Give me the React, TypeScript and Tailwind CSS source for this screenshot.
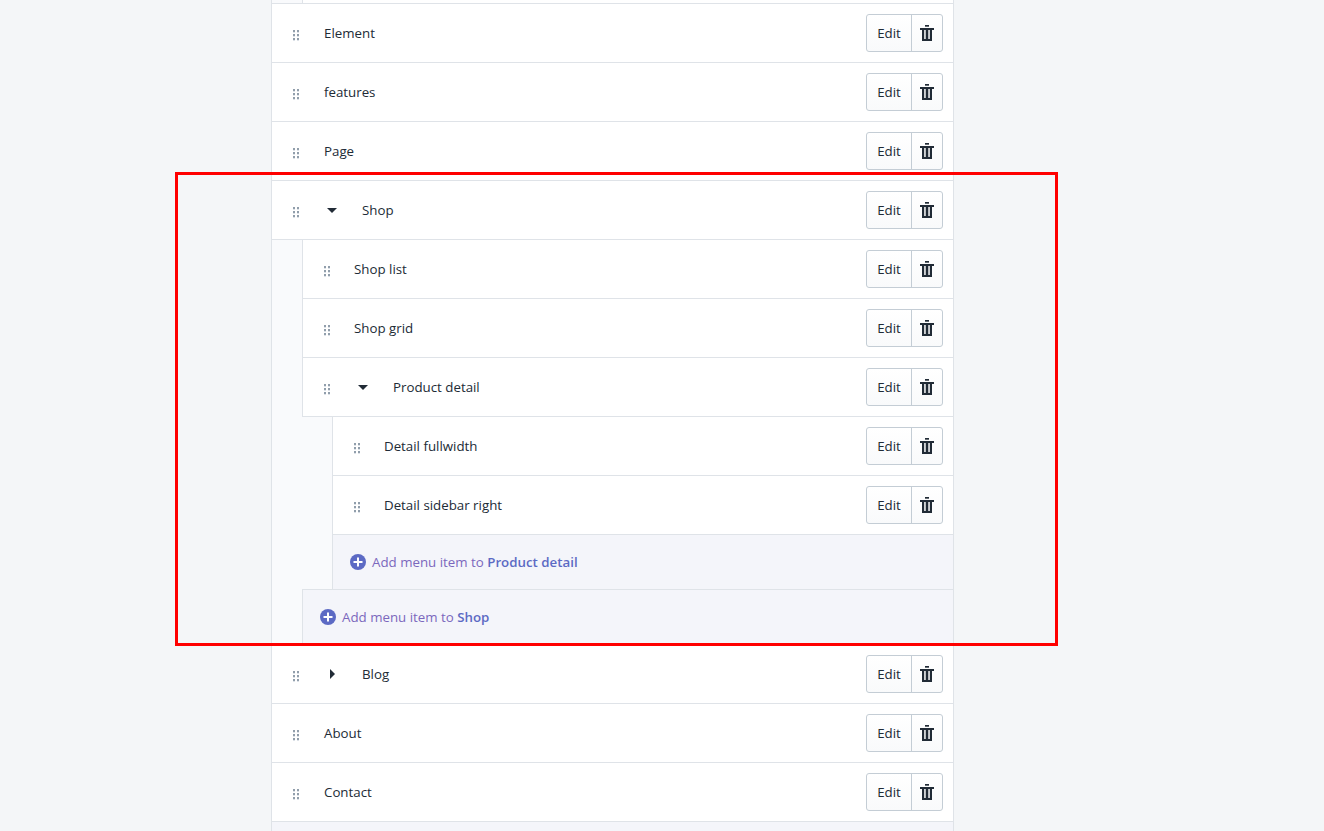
const dotPositions = [0, 1, 2];

const DragHandle = () => (
  <div className="mt-1 grid w-[6px] shrink-0 grid-cols-2 gap-x-[2px] gap-y-[2px]">
    {dotPositions.map((d) => (
      <span key={d} className="contents">
        <span className="h-[2px] w-[2px] bg-[#919eab] shadow-[0_1px_0_#dde2e8]" />
        <span className="h-[2px] w-[2px] bg-[#919eab] shadow-[0_1px_0_#dde2e8]" />
      </span>
    ))}
  </div>
);

const TrashIcon = () => (
  <svg width="14" height="16" viewBox="0 0 14 16" className="fill-[#212b36]">
    <path d="M5 0h4v1.7H5z" />
    <path d="M0 3h14v2H0z" />
    <path fillRule="evenodd" d="M2 5h10v11H2zM4.2 5v9h1.5V5zM8.3 5v9h1.5V5z" />
  </svg>
);

const RowActions = () => (
  <div className="ml-auto flex h-[38px] w-[77px] shrink-0 rounded-[3px] border border-[#c4cdd5] bg-gradient-to-b from-white to-[#f9fafb]">
    <div className="flex w-[45px] items-center justify-center border-r border-[#c4cdd5] pt-[2px] text-[#212b36]">Edit</div>
    <div className="flex flex-1 items-center justify-center">
      <TrashIcon />
    </div>
  </div>
);

type RowProps = {
  label: string;
  caret?: "down" | "right";
  topLevel?: boolean;
};

const MenuRow = ({ label, caret, topLevel }: RowProps) => (
  <div className="flex h-[59px] items-center border-b border-[#dfe3e8] bg-white pl-[21px] pr-[10px]">
    <DragHandle />
    {caret === "down" && (
      <div className="ml-[28px] mr-[25px] h-0 w-0 border-x-[5px] border-t-[5px] border-x-transparent border-t-[#212b36]" />
    )}
    {caret === "right" && (
      <div className="ml-[31px] mr-[27px] h-0 w-0 border-y-[5px] border-l-[5px] border-y-transparent border-l-[#212b36]" />
    )}
    <span className={`pt-[2px] ${caret ? "" : topLevel ? "ml-[25px]" : "ml-[24px]"}`}>{label}</span>
    <RowActions />
  </div>
);

const AddRow = ({ target, className }: { target: string; className: string }) => (
  <div className={`flex items-center bg-[#f4f5fa] pl-[17px] text-[#7b68bd] ${className}`}>
    <svg width="16" height="16" viewBox="0 0 16 16" className="mr-[6px] shrink-0">
      <circle cx="8" cy="8" r="8" fill="#5c6ac4" />
      <path d="M7 3.5h2V7h3.5v2H9v3.5H7V9H3.5V7H7z" fill="#fff" />
    </svg>
    <span className="pt-[2px]">
      Add menu item to <b className="font-semibold text-[#5c6ac4]">{target}</b>
    </span>
  </div>
);

export default function App() {
  return (
    <div className="relative h-[831px] overflow-hidden bg-[#f4f6f8] font-['Open_Sans',sans-serif] text-[13.3px] text-[#212b36]">
      <div className="ml-[271px] h-full w-[683px] border-x border-[#dfe3e8] bg-[#f9fafc]">
        {/* tail of the previous submenu */}
        <div className="h-[4px] border-b border-[#dfe3e8] pl-[30px]">
          <div className="h-[3px] border-l border-[#dfe3e8] bg-white" />
        </div>

        <MenuRow label="Element" topLevel />
        <MenuRow label="features" topLevel />
        <MenuRow label="Page" topLevel />
        <MenuRow label="Shop" caret="down" />

        {/* Shop children */}
        <div className="pl-[30px]">
          <div className="border-l border-[#dfe3e8]">
            <MenuRow label="Shop list" />
            <MenuRow label="Shop grid" />
            <MenuRow label="Product detail" caret="down" />
          </div>
          <div className="pl-[30px]">
            <div className="border-l border-[#dfe3e8]">
              <MenuRow label="Detail fullwidth" />
              <MenuRow label="Detail sidebar right" />
              <AddRow target="Product detail" className="h-[54px]" />
            </div>
          </div>
          <div className="border-l border-[#dfe3e8]">
            <AddRow target="Shop" className="h-[56px] border-y border-[#dfe3e8]" />
          </div>
        </div>

        <MenuRow label="Blog" caret="right" />
        <MenuRow label="About" topLevel />
        <MenuRow label="Contact" topLevel />
        <div className="h-[9px] bg-[#f4f5fa]" />
      </div>

      {/* highlight box drawn over the screenshot */}
      <div className="absolute left-[175px] top-[172px] h-[474px] w-[883px] border-[3px] border-[#ff0000]" />
    </div>
  );
}
